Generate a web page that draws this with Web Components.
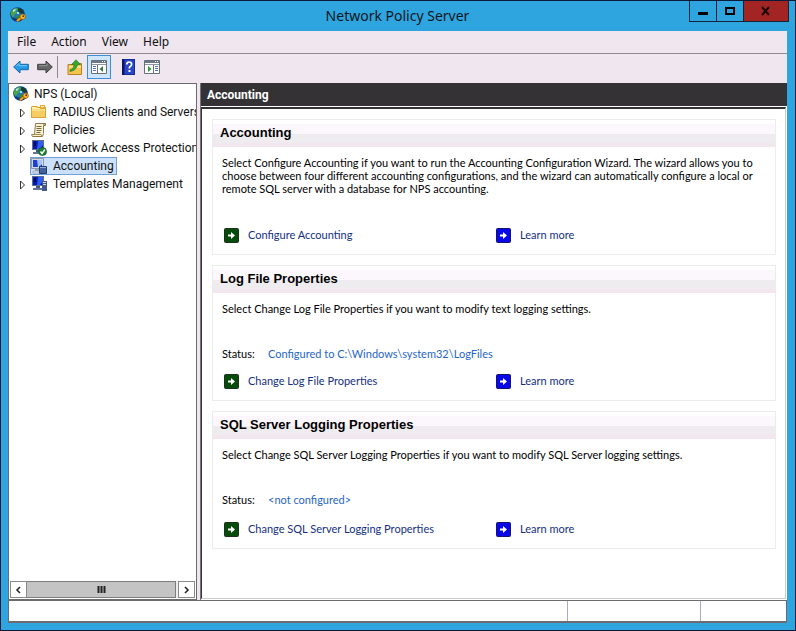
<!DOCTYPE html>
<html lang="en">
<head>
<meta charset="utf-8">
<title>Network Policy Server</title>
<style>
html, body { margin: 0; height: 100%; }
body { font-family: "Noto Sans", "Open Sans", sans-serif; font-size: 12px; line-height: 18px; color: #111; background: #2fa5df; }
</style>
</head>
<body>
<nps-window heading="Network Policy Server">
  <menu-bar slot="menu"></menu-bar>
  <tool-bar slot="tools"></tool-bar>
  <tree-pane slot="tree">
    <tree-item icon="globe" root>NPS (Local)</tree-item>
    <tree-item icon="folder" expandable>RADIUS Clients and Servers</tree-item>
    <tree-item icon="scroll" expandable>Policies</tree-item>
    <tree-item icon="nap" expandable>Network Access Protection</tree-item>
    <tree-item icon="accounting" selected>Accounting</tree-item>
    <tree-item icon="templates" expandable>Templates Management</tree-item>
  </tree-pane>
  <detail-pane slot="detail" heading="Accounting">
    <task-card heading="Accounting">
      Select Configure Accounting if you want to run the Accounting Configuration Wizard. The wizard allows you to choose between four different accounting configurations, and the wizard can automatically configure a local or remote SQL server with a database for NPS accounting.
      <task-link slot="links">Configure Accounting</task-link>
      <task-link slot="links" tone="info">Learn more</task-link>
    </task-card>
    <task-card heading="Log File Properties" status="Configured to C:\Windows\system32\LogFiles">
      Select Change Log File Properties if you want to modify text logging settings.
      <task-link slot="links">Change Log File Properties</task-link>
      <task-link slot="links" tone="info">Learn more</task-link>
    </task-card>
    <task-card heading="SQL Server Logging Properties" status="&lt;not configured&gt;" roomy>
      Select Change SQL Server Logging Properties if you want to modify SQL Server logging settings.
      <task-link slot="links">Change SQL Server Logging Properties</task-link>
      <task-link slot="links" tone="info">Learn more</task-link>
    </task-card>
  </detail-pane>
  <status-bar slot="status"></status-bar>
</nps-window>

<script>
const define = (name, render) => customElements.define(name, class extends HTMLElement {
  connectedCallback() {
    if (this.shadowRoot) return;
    this.attachShadow({ mode: 'open' }).innerHTML = render(this);
  }
});
const esc = s => (s || '').replace(/&/g, '&amp;').replace(/</g, '&lt;');

const monitor = `
  <path d="M1 0h12v10H1z" fill="#5d6f94"/>
  <path d="M2 1h10v8H2z" fill="#0818a8"/><path d="M7 1h5v4L9 9H6z" fill="#2f5cf5"/><path d="M3 2h2v4H3z" fill="#000a60"/>
  <path d="M5 10h4v2H5z" fill="#46587c"/><path d="M2 12h10v2H2z" fill="#64769c"/>`;
const icons = {
  globe: `<circle cx="7.5" cy="7.5" r="7.3" fill="#0c3c85"/>
    <circle cx="6.5" cy="6" r="5.4" fill="#2277c4"/>
    <path d="M1 5Q3 1 7 1l1 2-2 1 1 2-3 2-1 3Q0 8 1 5z" fill="#4aa546"/><path d="M8 1q4 0 6 4l-2 2-2-1-2-2z" fill="#173f30"/>
    <path d="M6 9l3-1 2 2-2 4-2-1z" fill="#2c8c3c"/><path d="M3 3l3-1-1 2-2 1z" fill="#c5e7f5"/><path d="M7 5h2v2H7z" fill="#9edaf3"/>
    <path d="M7 14l5-4" stroke="#6c3e00" stroke-width="3"/><path d="M7 14l5-4" stroke="#f4a824" stroke-width="2"/>
    <circle cx="12.7" cy="9.7" r="2.7" fill="#ffb32c" stroke="#8b5106" stroke-width=".7"/><circle cx="13.2" cy="9.2" r=".9" fill="#613400"/>`,
  folder: `<path d="M0 3l1-1h5l1 1h8v11H0z" fill="#d9a338"/><path d="M1 3h4l1 1h3v2H1z" fill="#fff1a8"/>
    <path d="M1 5h13v8H1z" fill="#f5cd62"/><path d="M1 5h13v2H1z" fill="#fbdf88"/><path d="M9 1h5v4H9z" fill="#e5aa32"/><path d="M10 2h3v1h-3z" fill="#fff2bd"/>`,
  scroll: `<path d="M4.5 1.5h10v2h-2v8l-1 3h-10l-1-2h3z" fill="#fbf3d3" stroke="#8b7850"/>
    <path d="M5.5 4.5h5M5.5 6.5h5M5.5 8.5h5M5.5 10.5h4" stroke="#73683f"/><path d="M1 12.5h9l1 2" fill="none" stroke="#a68a46"/><path d="M12 2h2v1h-2z" fill="#c9a863"/>`,
  nap: `<g>${monitor}</g><circle cx="11.5" cy="11.5" r="4" fill="#178430" stroke="#0b5420" stroke-width=".7"/><path d="M9.5 11.5l1.5 2 3-4" fill="none" stroke="#fff" stroke-width="1.4"/>`,
  accounting: `<path d="M.5.5h12v10H.5z" fill="#d5dbe6" stroke="#8b97ac"/><path d="M2 2h9v7H2z" fill="#1c3fd6"/><path d="M6 2h5v4L8 9H7z" fill="#a8c2fb"/><path d="M4 11h4v2H4z" fill="#9aa6ba"/><path d="M2 13h7v2H2z" fill="#dfe6ef" stroke="#8996ab" stroke-width=".6"/>
    <path d="M8.5 8.5h7v7h-7z" fill="#42639c" stroke="#203e74"/><path d="M9 9h6v1H9z" fill="#91afd9"/>`,
  templates: `<g>${monitor}</g><path d="M11 5h5v10h-5z" fill="#44598a"/><path d="M12 6h3v1h-3zM12 8h3v1h-3z" fill="#cbd8ef"/>`,
  back: `<path d="M.7 8L7 2v3.3h8.3v5.4H7V14z" fill="#249be9" stroke="#1665ab"/><path d="M3 7.5l3-3v2.2h8" fill="none" stroke="#7bcdfb"/>`,
  forward: `<path d="M15.3 8L9 2v3.3H.7v5.4H9V14z" fill="#666" stroke="#3d3d3d"/><path d="M2 6.7h8V4.5" fill="none" stroke="#999"/>`,
  up: `<path d="M1 5.5h5l1-1h7.5v11H1z" fill="#f4c54f" stroke="#b98323"/><path d="M2 7h12v2H2z" fill="#ffe28b"/><path d="M3 11q4-1 4-5.500H4.500L9 .8l4.500 4.700H10.500q-1 6-7.500 7z" fill="#39a52f" stroke="#1c701b" stroke-width=".6"/>`,
  tree: `<path d="M.5 1.5h15v13H.5z" fill="#fff" stroke="#66717d"/><path d="M1 2h14v2H1z" fill="#6b7888"/><path d="M11 2h1v1h-1zM13 2h1v1h-1z" fill="#fff"/><path d="M1 5.5h14" stroke="#8995a1"/><path d="M6.500 6v8" stroke="#69747f"/><path d="M2 7.500h3M2 9.500h3M2 11.500h3" stroke="#5375a4"/><path d="M12 7v6L8.500 10z" fill="#317d37"/>`,
  action: `<path d="M.5 1.5h15v13H.5z" fill="#fff" stroke="#66717d"/><path d="M1 2h14v2H1z" fill="#6b7888"/><path d="M11 2h1v1h-1zM13 2h1v1h-1z" fill="#fff"/><path d="M1 5.5h14" stroke="#8995a1"/><path d="M9.500 6v8" stroke="#69747f"/><path d="M11 7.500h3M11 9.500h3M11 11.500h3" stroke="#5375a4"/><path d="M4 7v6l3.500-3z" fill="#35933d"/>`,
  help: `<path d="M2 0h13v16H2z" fill="#1b2c96"/><path d="M2 0h2v16H2z" fill="#0c1764"/><path d="M5 1h9v14H5z" fill="#2946c6"/><path d="M6.800 5.500q0-2.500 2.400-2.500t2.400 2.200q0 1.500-1.400 2.300-.9.6-.9 2" fill="none" stroke="#fff" stroke-width="1.700"/><path d="M8.500 11h2v2h-2z" fill="#fff"/>`,
  go: `<rect x=".5" y=".5" width="14" height="14" rx="1" fill="var(--tone)" stroke="var(--edge)"/><path d="M4 6.500h3V4l4 3.500L7 11V8.500H4z" fill="#fff"/>`
};
define('nps-icon', el => `<style>:host{display:block;flex:none;width:16px;height:16px}svg{display:block}</style>
  <svg width="16" height="16" viewBox="0 0 16 16" aria-hidden="true">${icons[el.getAttribute('name')]}</svg>`);

define('nps-window', el => `<style>
  :host{display:grid;grid-template-rows:31px 22px 30px 1fr 23px;min-height:100vh;box-sizing:border-box;padding:0 8px 7px 7px;background:#2fa5df;border:1px solid #0c1b3a;border-top:0}
  header{display:grid;grid-template-columns:100px 1fr 100px;border-top:1px solid #0c1b3a;box-sizing:border-box;margin:0 -8px 0 -7px;padding:0 6px 0 9px}
  header nps-icon{margin-top:6px}
  h1{margin:0;padding-right:4px;text-align:center;font-weight:400;font-size:14px;line-height:29px;color:#0b1722}
  .ctl{display:flex;justify-content:flex-end;height:21px}
  button{width:28px;border:1px solid #13243a;border-top:0;border-right:0;background:#2fa5df;padding:0;display:grid;place-items:center}
  button:last-child{width:47px;background:#a32523;border-right:1px solid #13243a}
  main{display:grid;grid-template-columns:189px 1fr;column-gap:3px;background:#efe6ef;min-height:0}
  </style>
  <header><nps-icon name="globe"></nps-icon><h1>${esc(el.getAttribute('heading'))}</h1>
  <div class="ctl">
    <button aria-label="Minimize"><svg width="12" height="12"><path d="M1 7h10v3H1z" fill="#000"/></svg></button>
    <button aria-label="Maximize"><svg width="12" height="12"><path d="M2 3h8v6H2z" fill="none" stroke="#000" stroke-width="2"/></svg></button>
    <button aria-label="Close"><svg width="12" height="12"><path d="M2 2l7 8M9 2L2 10" stroke="#1a0505" stroke-width="2"/></svg></button>
  </div></header>
  <slot name="menu"></slot><slot name="tools"></slot>
  <main><slot name="tree"></slot><slot name="detail"></slot></main>
  <slot name="status"></slot>`);

define('menu-bar', () => `<style>
  :host{display:flex;gap:15px;padding:0 9px;background:#efe6ef}
  button{border:0;background:none;padding:0;font:inherit;line-height:22px;color:inherit}
  </style>${['File', 'Action', 'View', 'Help'].map(t => `<button>${t}</button>`).join('')}`);

define('tool-bar', () => `<style>
  :host{display:flex;align-items:center;padding:0 1px 4px;border-top:1px solid #8f8a90;background:#efe6ef;box-sizing:border-box}
  button{width:24px;height:24px;padding:0;border:1px solid transparent;background:none;display:grid;place-items:center;flex:none}
  button.on{background:#cde6fb;border-color:#3f8fd8}
  i{width:1px;height:22px;background:#8f8a90;margin:0 5px 0 0}
  .gap{margin-left:5px}
  </style>
  <button aria-label="Back"><nps-icon name="back"></nps-icon></button>
  <button aria-label="Forward"><nps-icon name="forward"></nps-icon></button><i></i>
  <button aria-label="Up one level"><nps-icon name="up"></nps-icon></button>
  <button class="on" aria-label="Show or hide console tree"><nps-icon name="tree"></nps-icon></button>
  <button class="gap" aria-label="Help"><nps-icon name="help"></nps-icon></button>
  <button aria-label="Show or hide action pane"><nps-icon name="action"></nps-icon></button>`);

define('tree-pane', () => `<style>
  :host{display:flex;flex-direction:column;min-width:0;box-sizing:border-box;border:1px solid #6d6a70;background:#fff;font-family:Roboto,sans-serif}
  nav{flex:1;padding-top:1px;overflow:hidden}
  .sb{display:flex;height:17px;margin:1px;background:#eee}
  .sb button{width:17px;box-sizing:border-box;padding:0;border:1px solid #8a8a8a;background:#fff;display:grid;place-items:center}
  .track{flex:1;display:flex;padding-right:2px}
  .thumb{flex:1;background:#c4c4c4;border:1px solid #7d7d7d;border-left:0;display:grid;place-items:center}
  </style><nav aria-label="Console tree"><slot></slot></nav>
  <div class="sb"><button aria-label="Scroll left"><svg width="7" height="8"><path d="M5 1L2 4l3 3" fill="none" stroke="#222" stroke-width="1.5"/></svg></button>
  <div class="track"><div class="thumb"><svg width="9" height="7"><path d="M1.5 0v7M4.5 0v7M7.5 0v7" stroke="#222" stroke-width="2"/></svg></div></div>
  <button aria-label="Scroll right"><svg width="7" height="8"><path d="M2 1l3 3-3 3" fill="none" stroke="#222" stroke-width="1.5"/></svg></button></div>`);

define('tree-item', el => `<style>
  :host{display:flex;align-items:center;height:18px;padding-left:9px;white-space:nowrap}
  :host([root]){padding-left:3px}
  .tw{width:12px;height:11px;flex:none}
  .tw svg{display:block}
  .row{display:flex;align-items:center;gap:6px;height:18px;padding:0 3px 0 1px;box-sizing:border-box}
  :host([root]) .row{gap:5px}
  :host([selected]) .row{background:#cbe0fa;box-shadow:inset 0 0 0 1px #6f9fd6}
  </style>${el.hasAttribute('root') ? '' : `<span class="tw">${el.hasAttribute('expandable') ? '<svg width="8" height="11"><path d="M2.5 2v8L6.500 6z" fill="#fff" stroke="#333"/></svg>' : ''}</span>`}
  <span class="row"><nps-icon name="${el.getAttribute('icon')}"></nps-icon><slot></slot></span>`);

define('detail-pane', el => `<style>
  :host{display:flex;flex-direction:column;min-width:0;background:#fff;border-left:1px solid #777379}
  h2{margin:0;font:700 12px/24px Roboto,sans-serif;height:23px;color:#fff;background:#353235;padding-left:6px}
  section{flex:1;margin:1px 1px 1px 0;border:1px solid #ccc;border-top:2px solid #353235;border-left-color:#353235;padding:10px 9px 10px 10px;display:flex;flex-direction:column;gap:10px}
  </style><h2>${esc(el.getAttribute('heading'))}</h2><section><slot></slot></section>`);

define('task-card', el => {
  const s = el.getAttribute('status');
  return `<style>
  :host{display:block;border:1px solid #ececec;font:11px/13px Lato,"Liberation Sans",sans-serif;color:#000}
  h3{margin:0;height:27px;padding-left:7px;font:700 13px/26px "Liberation Sans",Arial,sans-serif;color:#000;
    background:linear-gradient(#fff 0 4px,#fcf6fd 4px 14px,#eeecef 14px 23px,#f2e6ef 23px)}
  .body{padding:9px 7px 10px 9px}
  p{margin:0 0 32px}
  dl{display:flex;margin:0 0 13px}
  :host([roomy]) dl{margin-bottom:15px}
  dt{width:46px}dd{margin:0;color:#1f66c9}
  .links{display:grid;grid-template-columns:272px 1fr;padding:1px 0 0 2px}
  @media (max-width:600px){.links{grid-template-columns:1fr 1fr}}
  </style><h3>${esc(el.getAttribute('heading'))}</h3><div class="body"><p><slot></slot></p>
  ${s ? `<dl><dt>Status:</dt><dd>${esc(s)}</dd></dl>` : ''}
  <div class="links"><slot name="links"></slot></div></div>`;
});

define('task-link', () => `<style>
  :host{display:block;--tone:#064a0c;--edge:#1d321d}
  :host([tone=info]){--tone:#0808e8;--edge:#14146e}
  a{display:flex;width:fit-content;align-items:flex-start;gap:8px;height:16px;color:#14307f;text-decoration:none}
  </style><a href="#"><nps-icon name="go"></nps-icon><span><slot></slot></span></a>`);

define('status-bar', () => `<style>
  :host{display:grid;grid-template-columns:1fr 132px 85px;gap:1px;box-sizing:border-box;border:1px solid #6d6a70;border-bottom-width:2px;background:#a9adb5}
  span{background:#fff}
  </style><span></span><span></span><span></span>`);
</script>
</body>
</html>
